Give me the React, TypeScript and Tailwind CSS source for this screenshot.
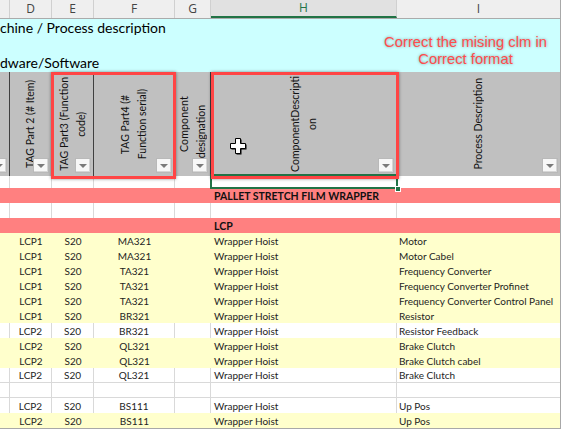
import React from "react";

const W = [
  "w-[10px]",
  "w-[42px]",
  "w-[42px]",
  "w-[81px]",
  "w-[36px]",
  "w-[186px]",
  "w-[163px]",
];

function Filter() {
  return (
    <div className="absolute bottom-[3px] right-[2px] w-[16px] h-[15px] bg-[#f7f7f7] border border-[#b9b9b9] shadow-[inset_-1px_-1px_0_#d6d6d6] flex items-center justify-center">
      <svg width="8" height="4" viewBox="0 0 8 4">
        <polygon points="0,0 8,0 4,4" fill="#7a7a7a" />
      </svg>
    </div>
  );
}

function VText({ children }: { children: React.ReactNode }) {
  return (
    <div className="[writing-mode:vertical-rl] rotate-180 text-center leading-[17px] whitespace-nowrap">
      {children}
    </div>
  );
}

type Row = {
  kind: "y" | "w" | "p";
  d?: string;
  e?: string;
  f?: string;
  h?: string;
  i?: string;
  line?: boolean;
  hgt?: string;
};

const rows: Row[] = [
  { kind: "w", hgt: "h-[12px]" },
  { kind: "p", h: "PALLET STRETCH FILM WRAPPER" },
  { kind: "w" },
  { kind: "p", h: "LCP" },
  { kind: "y", d: "LCP1", e: "S20", f: "MA321", h: "Wrapper Hoist", i: "Motor" },
  { kind: "y", d: "LCP1", e: "S20", f: "MA321", h: "Wrapper Hoist", i: "Motor Cabel" },
  { kind: "y", d: "LCP1", e: "S20", f: "TA321", h: "Wrapper Hoist", i: "Frequency Converter" },
  { kind: "y", d: "LCP1", e: "S20", f: "TA321", h: "Wrapper Hoist", i: "Frequency Converter Profinet" },
  { kind: "y", d: "LCP1", e: "S20", f: "TA321", h: "Wrapper Hoist", i: "Frequency Converter Control Panel" },
  { kind: "y", d: "LCP1", e: "S20", f: "BR321", h: "Wrapper Hoist", i: "Resistor" },
  { kind: "w", d: "LCP2", e: "S20", f: "BR321", h: "Wrapper Hoist", i: "Resistor Feedback" },
  { kind: "y", d: "LCP2", e: "S20", f: "QL321", h: "Wrapper Hoist", i: "Brake Clutch" },
  { kind: "y", d: "LCP2", e: "S20", f: "QL321", h: "Wrapper Hoist", i: "Brake Clutch cabel" },
  { kind: "w", d: "LCP2", e: "S20", f: "QL321", h: "Wrapper Hoist", i: "Brake Clutch", line: true },
  { kind: "w", line: true },
  { kind: "w", d: "LCP2", e: "S20", f: "BS111", h: "Wrapper Hoist", i: "Up Pos" },
  { kind: "y", d: "LCP2", e: "S20", f: "BS111", h: "Wrapper Hoist", i: "Up Pos" },
];

function DataRow({ r }: { r: Row }) {
  const bg =
    r.kind === "y" ? "bg-[#ffffcc]" : r.kind === "p" ? "bg-[#ff8080]" : "bg-white";
  const vr = r.kind === "w" ? "border-r border-[#d9d9d9]" : "";
  const bb = r.line ? "border-b border-[#d9d9d9]" : "";
  const h = r.hgt ?? "h-[15px]";
  const center = "flex items-center justify-center";
  return (
    <div className={`flex ${h} ${bg} ${bb} text-[10px] leading-[14px] text-[#1e1e1e]`}>
      <div className={`${W[0]} ${vr}`} />
      <div className={`${W[1]} ${vr} ${center}`}>{r.d}</div>
      <div className={`${W[2]} ${vr} ${center}`}>{r.e}</div>
      <div className={`${W[3]} ${vr} ${center}`}>{r.f}</div>
      <div className={`${W[4]} ${vr}`} />
      <div
        className={`${W[5]} ${vr} pl-[3px] flex items-center whitespace-nowrap ${
          r.kind === "p" ? "font-bold text-[10.5px] text-[#111]" : ""
        }`}
      >
        {r.h}
      </div>
      <div className={`${W[6]} pl-[2px] flex items-center whitespace-nowrap`}>{r.i}</div>
    </div>
  );
}

export default function App() {
  const letters = ["", "D", "E", "F", "G", "H", "I"];
  return (
    <div className="relative w-[564px] h-[429px] overflow-hidden bg-white font-['Lato',sans-serif]">
      <div className="w-[561px] border-r border-b border-[#a8a8a8] flex flex-col">
        {/* column letters */}
        <div className="flex h-[19px] bg-[#efefef] border-b border-[#ababab] font-['Open_Sans',sans-serif] text-[12px] text-[#444]">
          {letters.map((l, idx) => (
            <div
              key={idx}
              className={`${W[idx]} flex items-center justify-center ${
                idx < 6 ? "border-r border-[#d0d0d0]" : ""
              } ${
                l === "H"
                  ? "bg-[#e1e1e1] border-b-2 border-b-[#217346] text-[#217346]"
                  : ""
              }`}
            >
              {l}
            </div>
          ))}
        </div>

        {/* title rows */}
        <div className="h-[53px] bg-[#ccffff] text-[14px] leading-[17.5px] text-black whitespace-nowrap">
          <div className="h-[17.5px]">chine / Process description</div>
          <div className="h-[17.5px]" />
          <div className="h-[17.5px]">dware/Software</div>
        </div>

        {/* header */}
        <div className="flex h-[104px] bg-[#c0c0c0] text-[10.5px] text-[#111]">
          <div className={`${W[0]} relative overflow-hidden border-r border-[#404040]`}>
            <Filter />
          </div>
          <div className={`${W[1]} relative border-r border-[#404040] flex items-center justify-center`}>
            <VText>TAG Part 2 (# Item)</VText>
            <Filter />
          </div>
          <div className={`${W[2]} relative border-r border-[#404040] flex items-center justify-center`}>
            <VText>
              TAG Part3 (Function
              <br />
              code)
            </VText>
            <Filter />
          </div>
          <div className={`${W[3]} relative border-r border-[#404040] flex items-center justify-center`}>
            <VText>
              TAG Part4 (#
              <br />
              Function serial)
            </VText>
            <Filter />
          </div>
          <div className={`${W[4]} relative border-r border-[#404040] flex items-end justify-center`}>
            <div className="flex items-end">
              <div className="[writing-mode:vertical-rl] rotate-180 leading-[17px] mb-[24px] tracking-[0.2px] whitespace-nowrap">
                Component
              </div>
              <div className="[writing-mode:vertical-rl] rotate-180 leading-[17px] mb-[18px] whitespace-nowrap">
                designation
              </div>
            </div>
            <Filter />
          </div>
          <div className={`${W[5]} relative border-r border-[#404040] flex items-center justify-center`}>
            <VText>
              ComponentDescripti
              <br />
              on
            </VText>
            <Filter />
          </div>
          <div className={`${W[6]} relative flex items-center justify-center`}>
            <VText>Process Description</VText>
            <Filter />
          </div>
        </div>

        {rows.map((r, i) => (
          <DataRow key={i} r={r} />
        ))}
      </div>

      {/* note text box */}
      <div className="absolute left-[375px] top-[34px] w-[181px] text-center font-['Liberation_Sans',sans-serif] text-[14.8px] leading-[17px] text-[#ff4d4d] [text-shadow:0_0_3px_rgba(0,0,0,0.4)] whitespace-nowrap">
        Correct the mising clm in
        <br />
        Correct format
      </div>

      {/* selection */}
      <div className="absolute left-[210px] top-[174px] w-[188px] h-[15px] border-2 border-[#217346]" />
      <div className="absolute left-[395px] top-[186px] w-[6px] h-[6px] bg-[#217346] border border-white" />

      {/* red annotation rectangles */}
      <div className="absolute left-[51px] top-[72px] w-[125px] h-[107px] border-[3px] border-[#ff4545] shadow-[0_0_3px_rgba(0,0,0,0.45)]" />
      <div className="absolute left-[211px] top-[72px] w-[188px] h-[107px] border-[3px] border-[#ff4545] shadow-[0_0_3px_rgba(0,0,0,0.45)]" />

      {/* cursor */}
      <svg
        width="17"
        height="17"
        viewBox="0 0 17 17"
        className="absolute left-[230px] top-[138px]"
      >
        <path d="M6.5 1.5h5v5h5v5h-5v5h-5v-5h-5v-5h5z" fill="black" />
        <path
          d="M5.5 0.5h5v5h5v5h-5v5h-5v-5h-5v-5h5z"
          fill="white"
          stroke="black"
          strokeWidth="1"
        />
      </svg>
    </div>
  );
}
